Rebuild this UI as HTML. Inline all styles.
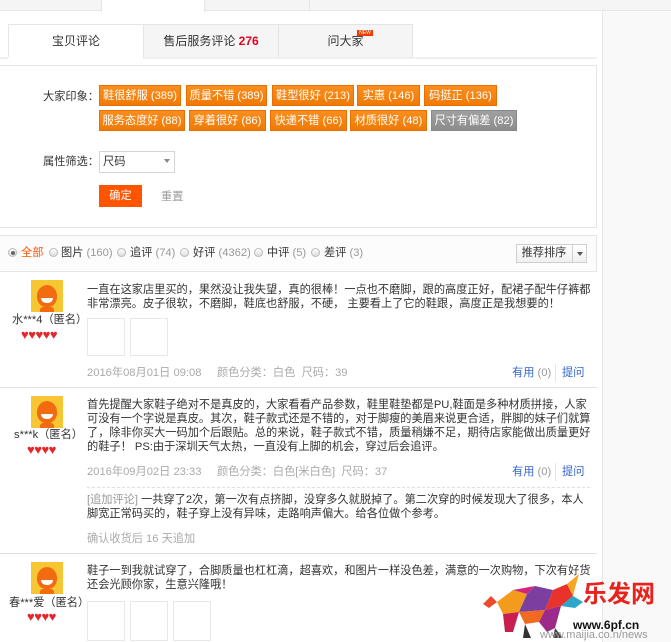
<!DOCTYPE html>
<html><head><meta charset="utf-8"><style>
*{margin:0;padding:0;box-sizing:border-box}
body{width:671px;height:642px;overflow:hidden;background:#fff;font-family:"Liberation Sans","Noto Sans CJK SC",sans-serif;font-size:11.2px;color:#333;position:relative}
.a{position:absolute;white-space:nowrap}
.tag{position:absolute;height:21px;line-height:21px;color:#fff;text-align:center;background:linear-gradient(#fb8e1e,#f07a05);border:1px solid #e86f00;font-size:11.2px}
.tag.g{background:linear-gradient(#a0a0a0,#8c8c8c);border-color:#888}
.radio{position:absolute;width:9px;height:9px;border-radius:50%;border:1px solid #bbb;background:linear-gradient(#fff,#ddd);top:248px}
.gray{color:#999}
.txt{position:absolute;left:87px;width:505px;line-height:14px;white-space:normal;font-size:11.2px;color:#333}
.av{position:absolute;left:31px;width:32px;height:32px;background:#f7c733;overflow:hidden}
.av i{position:absolute;left:6px;top:5px;width:20px;height:22px;border-radius:50% 50% 45% 45%;background:#f26b10}
.av b{position:absolute;left:9px;top:27px;width:14px;height:8px;background:#f26b10;border-radius:3px}
.av em{position:absolute;left:10px;top:18px;width:12px;height:5px;background:#fff;border-radius:0 0 6px 6px}
.hearts{position:absolute;color:#e4272d;font-size:13px;line-height:12px;letter-spacing:-0.5px}
.box{position:absolute;width:38px;height:38px;border:1px solid #e8e8e8}
.sep{position:absolute;left:0;width:597px;height:1px;background:#e0e0e0}
.blue{color:#3366cc}
</style></head><body>
<div class="a" style="left:0;top:0;width:671px;height:11px;background:#f5f5f5;border-bottom:1px solid #e8e8e8"></div>
<div class="a" style="left:101px;top:0;width:104px;height:12px;background:#fff;border-left:1px solid #e5e5e5;border-right:1px solid #e5e5e5"></div>
<div class="a" style="left:309px;top:0;width:1px;height:11px;background:#e5e5e5"></div>
<div class="a" style="left:602px;top:11px;width:69px;height:631px;background:#f9f9f9;border-left:1px solid #e8e8e8"></div>
<div class="a" style="left:8px;top:24px;width:136px;height:34px;background:#fff;border:1px solid #e5e5e5;border-bottom:none;text-align:center;line-height:33px;font-size:12px">宝贝评论</div>
<div class="a" style="left:143px;top:24px;width:136px;height:33px;background:#f5f5f5;border:1px solid #e5e5e5;border-bottom:none;text-align:center;line-height:33px;font-size:12px">售后服务评论 <b style="color:#e4001c">276</b></div>
<div class="a" style="left:278px;top:24px;width:135px;height:33px;background:#f5f5f5;border:1px solid #e5e5e5;border-bottom:none;text-align:center;line-height:33px;font-size:12px">问大家</div>
<div class="a" style="left:357px;top:30px;width:16px;height:6px;background:#f03c00;color:#fff;font-size:5px;line-height:6px;text-align:center">NEW</div>
<div class="a" style="left:0;top:57px;width:597px;height:2px;background:#efefef"></div>
<div class="a" style="left:8px;top:57px;width:135px;height:2px;background:#fff"></div>
<div class="a" style="left:-1px;top:65px;width:598px;height:163px;border:1px solid #e5e5e5"></div>
<div class="a" style="left:43px;top:90px;line-height:14px">大家印象：</div>
<div class="tag" style="left:99px;top:85px;width:82px">鞋很舒服 (389)</div>
<div class="tag" style="left:186px;top:85px;width:81px">质量不错 (389)</div>
<div class="tag" style="left:272px;top:85px;width:82px">鞋型很好 (213)</div>
<div class="tag" style="left:357px;top:85px;width:63px">实惠 (146)</div>
<div class="tag" style="left:424px;top:85px;width:73px">码挺正 (136)</div>
<div class="tag" style="left:99px;top:110px;width:86px">服务态度好 (88)</div>
<div class="tag" style="left:189px;top:110px;width:77px">穿着很好 (86)</div>
<div class="tag" style="left:270px;top:110px;width:77px">快递不错 (66)</div>
<div class="tag" style="left:350px;top:110px;width:77px">材质很好 (48)</div>
<div class="tag g" style="left:431px;top:110px;width:86px">尺寸有偏差 (82)</div>
<div class="a" style="left:43px;top:155px;line-height:14px">属性筛选：</div>
<div class="a" style="left:99px;top:151px;width:76px;height:22px;border:1px solid #d5d5d5;line-height:20px;padding-left:3px">尺码</div>
<div class="a" style="left:164px;top:159px;width:0;height:0;border-left:3px solid transparent;border-right:3px solid transparent;border-top:4px solid #888"></div>
<div class="a" style="left:99px;top:185px;width:43px;height:22px;background:#ff5500;color:#fff;text-align:center;line-height:22px">确定</div>
<div class="a gray" style="left:161px;top:190px;line-height:14px">重置</div>
<div class="a" style="left:-1px;top:235px;width:598px;height:37px;border:1px solid #e5e5e5;background:#fcfcfc"></div>
<div class="radio" style="left:8px"></div><div class="a" style="left:11px;top:251px;width:4px;height:4px;border-radius:50%;background:#666"></div>
<div class="a" style="left:21px;top:246px;line-height:14px;color:#ff5500">全部</div>
<div class="radio" style="left:49px"></div><div class="a" style="left:61px;top:246px;line-height:14px">图片 <span class="gray">(160)</span></div>
<div class="radio" style="left:117px"></div><div class="a" style="left:130px;top:246px;line-height:14px">追评 <span class="gray">(74)</span></div>
<div class="radio" style="left:180px"></div><div class="a" style="left:193px;top:246px;line-height:14px">好评 <span class="gray">(4362)</span></div>
<div class="radio" style="left:254px"></div><div class="a" style="left:267px;top:246px;line-height:14px">中评 <span class="gray">(5)</span></div>
<div class="radio" style="left:311px"></div><div class="a" style="left:324px;top:246px;line-height:14px">差评 <span class="gray">(3)</span></div>
<div class="a" style="left:516px;top:244px;width:71px;height:19px;border:1px solid #d0d0d0;background:linear-gradient(#fff,#f0f0f0)"></div>
<div class="a" style="left:516px;top:246px;width:56px;text-align:center;line-height:14px">推荐排序</div>
<div class="a" style="left:572px;top:244px;width:1px;height:19px;background:#d0d0d0"></div>
<div class="a" style="left:577px;top:252px;border-left:3px solid transparent;border-right:3px solid transparent;border-top:4px solid #555"></div>
<div class="av" style="top:280px"><i></i><b></b><em></em></div>
<div class="a" style="left:12px;top:313px;line-height:14px">水***4（匿名）</div>
<div class="hearts a" style="left:21px;top:329px">♥♥♥♥♥</div>
<div class="txt" style="top:283px">一直在这家店里买的，果然没让我失望，真的很棒！一点也不磨脚，跟的高度正好，配裙子配牛仔裤都非常漂亮。皮子很软，不磨脚，鞋底也舒服，不硬， 主要看上了它的鞋跟，高度正是我想要的！</div>
<div class="box" style="left:87px;top:318px"></div><div class="box" style="left:130px;top:318px"></div>
<div class="a gray" style="left:87px;top:366px;line-height:14px;color:#aaa">2016年08月01日 09:08 &nbsp; &nbsp; 颜色分类：白色 &nbsp;尺码：39</div>
<div class="a" style="left:512px;top:366px;line-height:14px"><span class="blue">有用</span> <span class="gray">(0)</span></div>
<div class="a" style="left:555px;top:364px;width:1px;height:18px;background:#e5e5e5"></div>
<div class="a blue" style="left:562px;top:366px;line-height:14px">提问</div>
<div class="sep" style="top:387px"></div>
<div class="av" style="top:396px"><i></i><b></b><em></em></div>
<div class="a" style="left:14px;top:428px;line-height:14px">s***k（匿名）</div>
<div class="hearts a" style="left:27px;top:444px">♥♥♥♥</div>
<div class="txt" style="top:398px">首先提醒大家鞋子绝对不是真皮的，大家看看产品参数，鞋里鞋垫都是PU,鞋面是多种材质拼接，人家可没有一个字说是真皮。其次，鞋子款式还是不错的，对于脚瘦的美眉来说更合适，胖脚的妹子们就算了，除非你买大一码加个后跟贴。总的来说，鞋子款式不错，质量稍嫌不足，期待店家能做出质量更好的鞋子！ PS:由于深圳天气太热，一直没有上脚的机会，穿过后会追评。</div>
<div class="a" style="left:87px;top:465px;line-height:14px;color:#aaa">2016年09月02日 23:33 &nbsp; &nbsp; 颜色分类：白色[米白色] &nbsp;尺码：37</div>
<div class="a" style="left:512px;top:465px;line-height:14px"><span class="blue">有用</span> <span class="gray">(0)</span></div>
<div class="a" style="left:555px;top:463px;width:1px;height:18px;background:#e5e5e5"></div>
<div class="a blue" style="left:562px;top:465px;line-height:14px">提问</div>
<div class="a" style="left:87px;top:487px;width:503px;border-top:1px dashed #e0e0e0"></div>
<div class="txt" style="top:493px"><span style="color:#999">[追加评论]</span> 一共穿了2次，第一次有点挤脚，没穿多久就脱掉了。第二次穿的时候发现大了很多，本人脚宽正常码买的，鞋子穿上没有异味，走路响声偏大。给各位做个参考。</div>
<div class="a" style="left:87px;top:532px;line-height:14px;color:#aaa">确认收货后 16 天追加</div>
<div class="sep" style="top:553px"></div>
<div class="av" style="top:562px"><i></i><b></b><em></em></div>
<div class="a" style="left:9px;top:596px;line-height:14px">春***爱（匿名）</div>
<div class="hearts a" style="left:27px;top:611px">♥♥♥♥</div>
<div class="txt" style="top:564px">鞋子一到我就试穿了，合脚质量也杠杠滴，超喜欢，和图片一样没色差，满意的一次购物，下次有好货还会光顾你家，生意兴隆哦！</div>
<div class="box" style="left:87px;top:601px;height:40px"></div><div class="box" style="left:130px;top:601px;height:40px"></div><div class="box" style="left:173px;top:601px;height:40px"></div>
<svg class="a" style="left:483px;top:572px" width="105" height="68" viewBox="0 0 105 68">
<polygon points="0,32 8,24 14,30 6,36" fill="#e94b2b"/>
<polygon points="14,30 30,18 44,22 36,40 20,42" fill="#f39b1c"/>
<polygon points="30,18 52,14 44,22" fill="#d5247e"/>
<polygon points="44,22 52,14 70,18 62,38 36,40" fill="#7a3fa0"/>
<polygon points="62,38 70,18 84,12 90,24 78,34" fill="#e8322c"/>
<polygon points="84,12 96,2 92,16 90,24" fill="#f5a623"/>
<polygon points="90,24 100,30 92,36 78,34" fill="#2aa7c9"/>
<polygon points="20,42 36,40 30,60 22,60" fill="#c81e50"/>
<polygon points="36,40 62,38 56,50 42,52" fill="#f06a1f"/>
<polygon points="56,50 62,38 78,34 72,56 64,60" fill="#9b2a8a"/>
<polygon points="42,52 48,66 40,66" fill="#333"/>
<polygon points="72,56 80,66 70,66" fill="#444"/>
</svg>
<div class="a" style="left:583px;top:578px;font-size:24px;line-height:28px;font-weight:bold;color:#e8231c;font-family:'Noto Sans CJK SC',sans-serif">乐发网</div>
<div class="a" style="left:573px;top:618px;font-size:12px;line-height:14px;font-weight:bold;color:#111">www.6pf.cn</div>
<div class="a" style="left:540px;top:628px;font-size:11px;line-height:14px;color:#999">www.maijia.co.n/news</div>
</body></html>
